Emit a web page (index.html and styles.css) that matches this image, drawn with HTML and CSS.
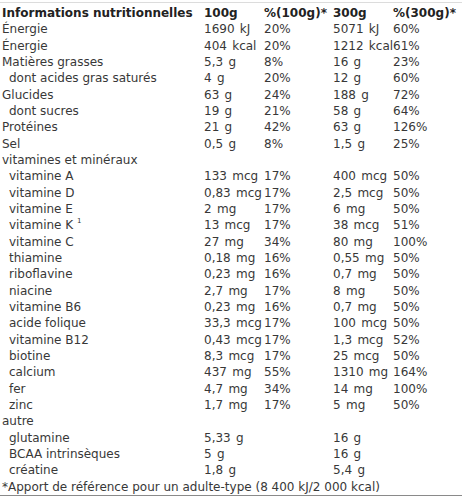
FILE: index.html
```html
<!DOCTYPE html>
<html lang="fr">
<head>
<meta charset="utf-8">
<link rel="stylesheet" href="styles.css">
</head>
<body>
<div class="panel">
<table class="nutri">
<colgroup><col class="c1"><col class="c2"><col class="c3"><col class="c4"><col class="c5"></colgroup>
<thead>
<tr><th>Informations nutritionnelles</th><th>100g</th><th>%(100g)*</th><th>300g</th><th>%(300g)*</th></tr>
</thead>
<tbody>
<tr><td>Énergie</td><td>1690 kJ</td><td>20%</td><td>5071 kJ</td><td>60%</td></tr>
<tr><td>Énergie</td><td>404 kcal</td><td>20%</td><td>1212 kcal</td><td>61%</td></tr>
<tr><td>Matières grasses</td><td>5,3 g</td><td>8%</td><td>16 g</td><td>23%</td></tr>
<tr><td class="sub">dont acides gras saturés</td><td>4 g</td><td>20%</td><td>12 g</td><td>60%</td></tr>
<tr><td>Glucides</td><td>63 g</td><td>24%</td><td>188 g</td><td>72%</td></tr>
<tr><td class="sub">dont sucres</td><td>19 g</td><td>21%</td><td>58 g</td><td>64%</td></tr>
<tr><td>Protéines</td><td>21 g</td><td>42%</td><td>63 g</td><td>126%</td></tr>
<tr><td>Sel</td><td>0,5 g</td><td>8%</td><td>1,5 g</td><td>25%</td></tr>
<tr><td>vitamines et minéraux</td><td></td><td></td><td></td><td></td></tr>
<tr><td class="sub">vitamine A</td><td>133 mcg</td><td>17%</td><td>400 mcg</td><td>50%</td></tr>
<tr><td class="sub">vitamine D</td><td>0,83 mcg</td><td>17%</td><td>2,5 mcg</td><td>50%</td></tr>
<tr><td class="sub">vitamine E</td><td>2 mg</td><td>17%</td><td>6 mg</td><td>50%</td></tr>
<tr><td class="sub">vitamine K <sup class="note">1</sup></td><td>13 mcg</td><td>17%</td><td>38 mcg</td><td>51%</td></tr>
<tr><td class="sub">vitamine C</td><td>27 mg</td><td>34%</td><td>80 mg</td><td>100%</td></tr>
<tr><td class="sub">thiamine</td><td>0,18 mg</td><td>16%</td><td>0,55 mg</td><td>50%</td></tr>
<tr><td class="sub">riboflavine</td><td>0,23 mg</td><td>16%</td><td>0,7 mg</td><td>50%</td></tr>
<tr><td class="sub">niacine</td><td>2,7 mg</td><td>17%</td><td>8 mg</td><td>50%</td></tr>
<tr><td class="sub">vitamine B6</td><td>0,23 mg</td><td>16%</td><td>0,7 mg</td><td>50%</td></tr>
<tr><td class="sub">acide folique</td><td>33,3 mcg</td><td>17%</td><td>100 mcg</td><td>50%</td></tr>
<tr><td class="sub">vitamine B12</td><td>0,43 mcg</td><td>17%</td><td>1,3 mcg</td><td>52%</td></tr>
<tr><td class="sub">biotine</td><td>8,3 mcg</td><td>17%</td><td>25 mcg</td><td>50%</td></tr>
<tr><td class="sub">calcium</td><td>437 mg</td><td>55%</td><td>1310 mg</td><td>164%</td></tr>
<tr><td class="sub">fer</td><td>4,7 mg</td><td>34%</td><td>14 mg</td><td>100%</td></tr>
<tr><td class="sub">zinc</td><td>1,7 mg</td><td>17%</td><td>5 mg</td><td>50%</td></tr>
<tr><td>autre</td><td></td><td></td><td></td><td></td></tr>
<tr><td class="sub">glutamine</td><td>5,33 g</td><td></td><td>16 g</td><td></td></tr>
<tr><td class="sub">BCAA intrinsèques</td><td>5 g</td><td></td><td>16 g</td><td></td></tr>
<tr><td class="sub">créatine</td><td>1,8 g</td><td></td><td>5,4 g</td><td></td></tr>
</tbody>
<tfoot>
<tr><td colspan="5" class="foot">*Apport de référence pour un adulte-type (8 400 kJ/2 000 kcal)</td></tr>
</tfoot>
</table>
</div>
</body>
</html>
```
FILE: styles.css
```css
html, body {
  margin: 0;
  padding: 0;
  background: #fff;
}
.panel {
  width: 462px;
  margin-top: 2px;
  padding-top: 2px;
  border-top: 1px solid #dcdcdc;
  border-bottom: 1px solid #8a8a8a;
}
.nutri {
  border-collapse: collapse;
  table-layout: fixed;
  width: 460px;
  margin-left: 2px;
  font-family: "DejaVu Sans", sans-serif;
  font-size: 12px;
  color: #383838;
}
.c1 { width: 202px; }
.c2 { width: 60px; }
.c3 { width: 69px; }
.c4 { width: 60px; }
.c5 { width: 69px; }
.nutri th, .nutri td {
  padding: 0;
  height: 16.33px;
  line-height: 16.33px;
  text-align: left;
  white-space: nowrap;
  vertical-align: middle;
}
.nutri tbody td + td {
  word-spacing: 1.5px;
}
.nutri th {
  font-weight: bold;
  color: #222;
}
.nutri td.sub {
  padding-left: 7px;
}
.note {
  font-size: 7px;
  line-height: 0;
  vertical-align: 6px;
}
.nutri td.foot {
  overflow: visible;
}
```
